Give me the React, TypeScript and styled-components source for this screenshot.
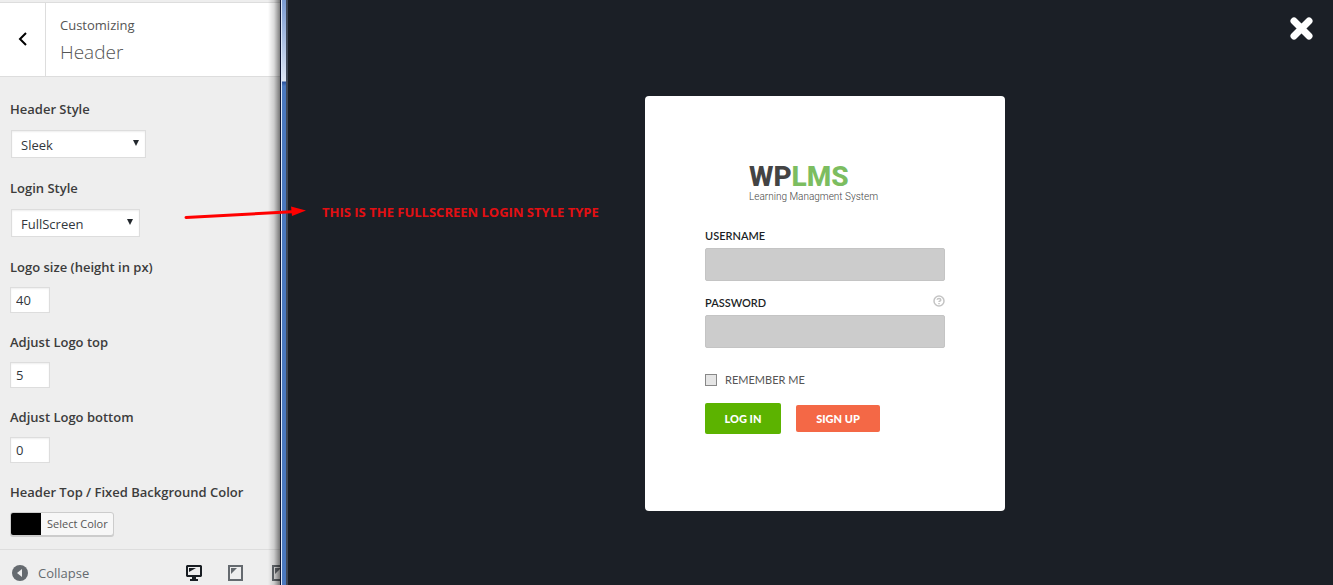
import React from 'react';
import styled, { createGlobalStyle } from 'styled-components';

const Global = createGlobalStyle`
  * { box-sizing: border-box; }
  html, body { margin: 0; padding: 0; }
  body { font-family: "Open Sans", "Noto Sans", sans-serif; font-size: 13px; color: #555d66; background: #1b1f26; }
  button, input, select { font: inherit; color: inherit; margin: 0; }
`;

const Page = styled.div`
  position: relative;
  display: flex;
  height: 100vh;
  overflow: hidden;
`;

const Sidebar = styled.aside`
  position: relative;
  display: flex;
  flex-direction: column;
  flex: none;
  width: 280px;
  overflow: hidden;
  background: #eee;
  &::after {
    content: '';
    position: absolute;
    top: 0;
    right: 0;
    bottom: 0;
    width: 12px;
    background: linear-gradient(to right, rgba(0, 0, 0, 0), rgba(0, 0, 0, 0.14) 50%, rgba(0, 0, 0, 0.5));
    pointer-events: none;
  }
`;

const PanelHeader = styled.header`
  display: flex;
  flex: none;
  height: 75px;
  margin-top: 2px;
  border-top: 1px solid #ddd;
  border-bottom: 1px solid #ddd;
  background: #fff;
`;

const BackButton = styled.button`
  display: flex;
  align-items: center;
  justify-content: center;
  width: 46px;
  padding: 0 0 2px;
  border: 0;
  border-right: 1px solid #ddd;
  background: #fff;
  color: #000;
`;

const PanelTitle = styled.h1`
  display: flex;
  flex-direction: column;
  margin: 0;
  padding: 12px 14px;
  font-size: 19px;
  line-height: 34px;
  font-weight: 300;
  color: #555;
  small { font-size: 13px; line-height: 20px; font-weight: 400; }
`;

const Controls = styled.form`
  display: flex;
  flex-direction: column;
  gap: 17px;
  padding: 20px 10px 0;
`;

const Control = styled.div`
  display: flex;
  flex-direction: column;
  align-items: flex-start;
  gap: 8px;
  label { font-size: 13px; line-height: 24px; font-weight: 600; color: #3c3c3c; white-space: nowrap; }
`;

const SelectBox = styled.span<{ $width: number }>`
  position: relative;
  display: flex;
  width: ${p => p.$width}px;
  height: 28px;
  margin: 1px;
  svg { position: absolute; right: 6px; top: 9px; pointer-events: none; }
  select {
    appearance: none;
    width: 100%;
    padding: 2px 20px 0 9px;
    border: 1px solid #ddd;
    border-radius: 0;
    background: #fff;
    box-shadow: inset 0 1px 2px rgba(0, 0, 0, 0.07);
    color: #32373c;
  }
`;

const NumberInput = styled.input`
  width: 40px;
  height: 26px;
  padding: 0 5px;
  border: 1px solid #ddd;
  background: #fff;
  box-shadow: inset 0 1px 2px rgba(0, 0, 0, 0.07);
  color: #32373c;
`;

const ColorButton = styled.button`
  display: flex;
  height: 24px;
  padding: 0;
  border: 1px solid #ccc;
  border-radius: 3px;
  background: #f7f7f7;
  box-shadow: 0 1px 0 #ccc;
  font-size: 11px;
  line-height: 22px;
  color: #555;
  overflow: hidden;
  i { width: 30px; height: 22px; background: #000; }
  span { padding: 0 5px 0 6px; }
`;

const Footer = styled.footer`
  display: flex;
  flex: none;
  align-items: center;
  width: 320px;
  height: 36px;
  margin-top: auto;
  padding: 10px 0 0 12px;
  border-top: 1px solid #ddd;
`;

const CollapseButton = styled.button`
  display: flex;
  flex: none;
  align-items: center;
  gap: 10px;
  width: 174px;
  padding: 0;
  border: 0;
  background: none;
  line-height: 18px;
  color: #656a6f;
`;

const DeviceButton = styled.button<{ $active?: boolean }>`
  display: flex;
  flex: none;
  width: ${p => (p.$active ? 42 : 44)}px;
  padding: 0;
  border: 0;
  background: none;
  color: ${p => (p.$active ? '#191e23' : '#656a6f')};
`;

const WindowEdge = styled.div`
  flex: none;
  width: 8px;
  border-left: 1px solid #0d1330;
  border-right: 2px solid #414958;
  background:
    linear-gradient(to right, #dce8fa 1px, transparent 1px),
    linear-gradient(to bottom, #7b9bd2, #dde5f3 81px, #2c529b 82px, #4a78bf 86px);
`;

const Stage = styled.main`
  position: relative;
  display: flex;
  flex: 1;
  justify-content: center;
  align-items: flex-start;
  min-width: 0;
  padding: 96px 0 0 29px;
  background: #1b1f26;
`;

const CloseButton = styled.button`
  position: absolute;
  top: 17px;
  right: 20px;
  display: flex;
  padding: 0;
  border: 0;
  background: none;
  color: #fff;
`;

const Note = styled.p`
  position: absolute;
  top: 202px;
  left: 34px;
  margin: 0;
  font-size: 13px;
  line-height: 20px;
  font-weight: 700;
  color: #e30f13;
  white-space: nowrap;
`;

const Arrow = styled.svg`
  position: absolute;
  left: 184px;
  top: 204px;
`;

const Card = styled.form`
  display: flex;
  flex-direction: column;
  width: 360px;
  padding: 68px 60px 77px;
  border-radius: 4px;
  background: #fff;
  font-family: Lato, sans-serif;
  font-size: 11px;
  color: #1b1f26;
`;

const Logo = styled.div`
  display: flex;
  flex-direction: column;
  padding-left: 44px;
  margin-bottom: 22px;
  font-family: Roboto, sans-serif;
  strong { font-size: 28px; line-height: 26px; font-weight: 800; color: #444; }
  em { font-style: normal; color: #7cbd60; }
  span { font-size: 10px; line-height: 14px; font-weight: 300; color: #444; }
`;

const Field = styled.div`
  display: flex;
  flex-wrap: wrap;
  justify-content: space-between;
  margin-bottom: 12px;
  label { margin-bottom: 2px; line-height: 20px; font-weight: 600; }
  input {
    width: 100%;
    height: 33px;
    padding: 0 8px;
    border: 1px solid #c4c4c4;
    border-radius: 2px;
    background: #ccc;
  }
`;

const HelpLink = styled.a`
  display: flex;
  align-items: center;
  height: 16px;
  color: #c4c4c4;
`;

const Remember = styled.label`
  display: flex;
  align-items: center;
  gap: 8px;
  margin: 12px 0 15px;
  line-height: 16px;
  color: #555;
  input {
    appearance: none;
    width: 12px;
    height: 12px;
    border: 1px solid #888;
    background: #e5e5e5;
  }
`;

const Actions = styled.div`
  display: flex;
  align-items: center;
  gap: 15px;
`;

const ActionButton = styled.button<{ $primary?: boolean }>`
  width: ${p => (p.$primary ? 76 : 84)}px;
  height: ${p => (p.$primary ? 31 : 27)}px;
  padding: 0;
  border: 0;
  border-radius: 2px;
  background: ${p => (p.$primary ? '#5cb300' : '#f46846')};
  color: #fff;
  font-weight: 900;
`;

const Caret = () => (
  <svg width="8" height="8" viewBox="0 0 8 8" aria-hidden="true">
    <path d="M1 1h6L4 7z" fill="#23282d" />
  </svg>
);

const TabletIcon = () => (
  <svg width="15" height="16" viewBox="0 0 15 16" aria-hidden="true">
    <path d="M1 1h13v14H1z" fill="none" stroke="currentColor" strokeWidth="2" />
    <path d="M3 3h6L3 9z" fill="currentColor" />
  </svg>
);

const numbers = [
  { id: 'logo-size', label: 'Logo size (height in px)', value: '40' },
  { id: 'logo-top', label: 'Adjust Logo top', value: '5' },
  { id: 'logo-bottom', label: 'Adjust Logo bottom', value: '0' },
];

export default function App() {
  return (
    <Page>
      <Global />
      <Sidebar>
        <PanelHeader>
          <BackButton aria-label="Back">
            <svg width="10" height="14" viewBox="0 0 10 14" fill="none" stroke="currentColor" strokeWidth="2">
              <path d="M8 1L2 7l6 6" />
            </svg>
          </BackButton>
          <PanelTitle><small>Customizing</small>Header</PanelTitle>
        </PanelHeader>
        <Controls>
          <Control>
            <label htmlFor="header-style">Header Style</label>
            <SelectBox $width={135}>
              <select id="header-style"><option>Sleek</option></select>
              <Caret />
            </SelectBox>
          </Control>
          <Control>
            <label htmlFor="login-style">Login Style</label>
            <SelectBox $width={129}>
              <select id="login-style"><option>FullScreen</option></select>
              <Caret />
            </SelectBox>
          </Control>
          {numbers.map(n => (
            <Control key={n.id}>
              <label htmlFor={n.id}>{n.label}</label>
              <NumberInput id={n.id} defaultValue={n.value} />
            </Control>
          ))}
          <Control>
            <label htmlFor="header-color">Header Top / Fixed Background Color</label>
            <ColorButton id="header-color" type="button"><i /><span>Select Color</span></ColorButton>
          </Control>
        </Controls>
        <Footer>
          <CollapseButton>
            <svg width="16" height="16" viewBox="0 0 16 16" aria-hidden="true">
              <circle cx="8" cy="8" r="8" fill="currentColor" />
              <path d="M10 4v8L5 8z" fill="#eee" />
            </svg>
            Collapse
          </CollapseButton>
          <DeviceButton $active aria-label="Desktop preview">
            <svg width="16" height="16" viewBox="0 0 16 16" aria-hidden="true">
              <path fillRule="evenodd" d="M1 0h14l1 1v10l-1 1h-5v2h2v2H4v-2h2v-2H1l-1-1V1zM2 2v8h12V2z" fill="currentColor" />
              <path d="M3 3h7L3 7z" fill="currentColor" />
            </svg>
          </DeviceButton>
          <DeviceButton aria-label="Tablet preview"><TabletIcon /></DeviceButton>
          <DeviceButton aria-label="Mobile preview"><TabletIcon /></DeviceButton>
        </Footer>
      </Sidebar>
      <WindowEdge />
      <Stage>
        <Note>THIS IS THE FULLSCREEN LOGIN STYLE TYPE</Note>
        <CloseButton aria-label="Close">
          <svg width="23" height="23" viewBox="0 0 23 23" aria-hidden="true">
            <path d="M4 4l15 15M19 4L4 19" stroke="currentColor" strokeWidth="7" strokeLinecap="round" />
          </svg>
        </CloseButton>
        <Card>
          <Logo>
            <strong>WP<em>LMS</em></strong>
            <span>Learning Managment System</span>
          </Logo>
          <Field>
            <label htmlFor="username">USERNAME</label>
            <input id="username" type="text" />
          </Field>
          <Field>
            <label htmlFor="password">PASSWORD</label>
            <HelpLink href="#" aria-label="Forgot password">
              <svg width="12" height="12" viewBox="0 0 12 12" fill="none" stroke="currentColor">
                <circle cx="6" cy="6" r="5" strokeWidth="1.5" />
                <path d="M4.2 4.8C4.3 3 7.8 3 7.8 4.9 7.8 6 6 6 6 7M6 8v1.2" strokeWidth="1.5" />
              </svg>
            </HelpLink>
            <input id="password" type="password" />
          </Field>
          <Remember><input type="checkbox" />REMEMBER ME</Remember>
          <Actions>
            <ActionButton $primary type="button">LOG IN</ActionButton>
            <ActionButton type="button">SIGN UP</ActionButton>
          </Actions>
        </Card>
      </Stage>
      <Arrow width="124" height="16" viewBox="0 0 124 16" aria-hidden="true">
        <path d="M2 13.500L108 7.800" stroke="#f00" strokeWidth="3" strokeLinecap="round" />
        <path d="M107 2.500L122 6.500L108 12z" fill="#f00" />
      </Arrow>
    </Page>
  );
}
